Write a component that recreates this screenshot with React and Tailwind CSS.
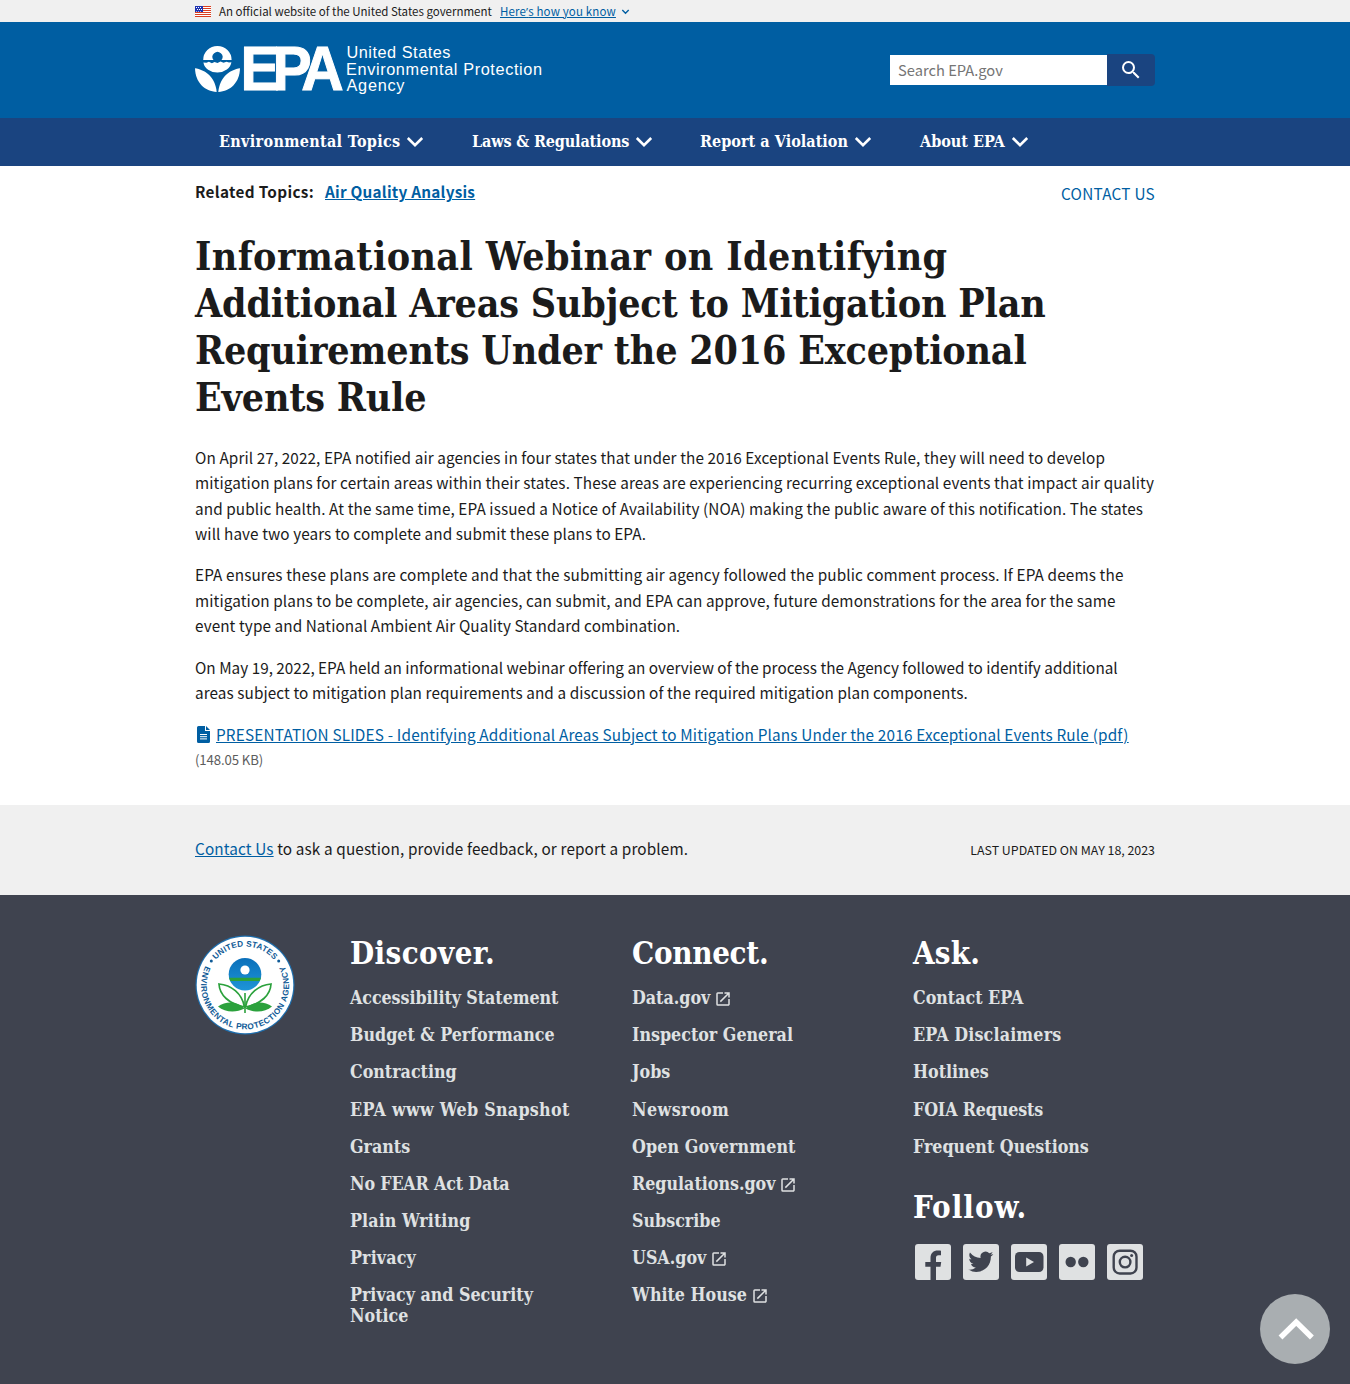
import React from 'react';

const SANS = 'font-["Noto_Sans_CJK_SC",sans-serif]';
const SERIF = 'font-["DejaVu_Serif_Condensed","DejaVu_Serif",serif] font-bold';

function Flag() {
  return (
    <svg width="16" height="11" viewBox="0 0 16 11" className="mr-2 shrink-0">
      <rect width="16" height="11" fill="#fff" />
      {[0, 2, 4, 6, 8, 10].map((y) => (
        <rect key={y} y={y} width="16" height="1" fill="#db3e1f" />
      ))}
      <rect width="8" height="6" fill="#1e33b1" />
      {[1, 3, 5].map((x) => (
        <g key={x} fill="#fff">
          <rect x={x} y="1" width="1" height="1" />
          <rect x={x + 1} y="3" width="1" height="1" />
          <rect x={x} y="5" width="1" height=".6" />
        </g>
      ))}
    </svg>
  );
}

function Logo() {
  return (
    <svg width="352" height="54" viewBox="195 43 352 54" className="block overflow-visible">
      <g fill="#fff">
        <path d="M203.200 60a14.200 14 0 0 1 28.400 0H221.500a5 5 0 1 0-8 0z" />
        <path d="M203.400 62.400l3 .4 2.500-1 3 1.400 2.600-1.200 3 1 3-1.400 3 1.200 3-1 2.500.8 2.400-.4a14.100 11.600 0 0 1-28 .2z" />
        <path d="M195 68.200c9.800 1.500 20 8 21.700 23.700-12-.6-21.400-9.500-21.700-23.700z" />
        <path d="M240 68.200c-9.800 1.500-20 8-21.700 23.700 12-.6 21.400-9.500 21.700-23.700z" />
      </g>
      <text
        transform="translate(240.500 0) scale(.94 1)"
        x="0 34 64.500"
        y="90.200"
        fill="#fff"
        stroke="#fff"
        strokeWidth="1"
        fontFamily="Liberation Sans, Arial, sans-serif"
        fontWeight="700"
        fontSize="62.500"
      >
        EPA
      </text>
      <g fill="#fff" fontFamily="Liberation Sans, Arial, sans-serif" fontSize="16.300">
        <text x="346.500" y="58.300" textLength="104">United States</text>
        <text x="346" y="74.600" textLength="196">Environmental Protection</text>
        <text x="346.500" y="91.200" textLength="58">Agency</text>
      </g>
    </svg>
  );
}

function Seal() {
  return (
    <svg width="100" height="100" viewBox="0 0 100 100" className="block">
      <circle cx="50" cy="50" r="49.500" fill="#1f6fae" />
      <circle cx="50" cy="50" r="48.300" fill="#fff" />
      <defs>
        <linearGradient id="sky" x1="0" y1="0" x2="0" y2="1">
          <stop offset="0" stopColor="#0a6fba" />
          <stop offset="1" stopColor="#1e95d6" />
        </linearGradient>
        <path id="ringTop" d="M11.500 50a38.500 38.500 0 0 1 77 0" />
        <path id="ringLow" d="M11 30a44 44 0 1 0 78 0" />
      </defs>
      <g fill="#0f5a96" fontFamily="Liberation Sans, Arial, sans-serif" fontWeight="700" fontSize="8.200">
        <text>
          <textPath href="#ringTop" startOffset="50%" textAnchor="middle" textLength="66">UNITED STATES</textPath>
        </text>
        <text>
          <textPath href="#ringLow" startOffset="50%" textAnchor="middle" textLength="178">ENVIRONMENTAL PROTECTION AGENCY</textPath>
        </text>
      </g>
      <circle cx="16.300" cy="26" r="1.500" fill="#0f5a96" />
      <circle cx="83.700" cy="26" r="1.500" fill="#0f5a96" />
      <circle cx="50" cy="39.300" r="16.300" fill="url(#sky)" />
      <path d="M34.100 42.700h31.800a16.300 16.300 0 0 1-1.300 3.300H35.400a16.300 16.300 0 0 1-1.300-3.300z" fill="#2ba13c" />
      <circle cx="50" cy="35" r="4.600" fill="#fff" />
      <g fill="#fff" stroke="#2ba13c" strokeWidth="1.700">
        <path d="M49.500 72C47 58 36 50 24 49c.5 11 10 20 25.500 23z" />
        <path d="M50.500 72C53 58 64 50 76 49c-.5 11-10 20-25.500 23z" />
      </g>
      <g fill="#2ba13c">
        <path d="M49.500 73.500C42 66 31 66 23 71.500c7 6 18 6.500 26.500 2z" />
        <path d="M50.500 73.500C58 66 69 66 77 71.500c-7 6-18 6.500-26.500 2z" />
        <path d="M49.200 58h1.600v20h-1.600z" />
      </g>
    </svg>
  );
}

function Chevron() {
  return (
    <svg width="18" height="12" viewBox="0 0 18 12" className="shrink-0">
      <path d="M1.800 2l7.200 7.200L16.200 2" fill="none" stroke="#fff" strokeWidth="2.600" />
    </svg>
  );
}

function External() {
  return (
    <svg width="18" height="18" viewBox="0 0 24 24" fill="#dfe1e2" className="ml-1 mt-[3px] shrink-0">
      <path d="M19 19H5V5h7V3H5a2 2 0 0 0-2 2v14a2 2 0 0 0 2 2h14c1.100 0 2-.9 2-2v-7h-2v7zM14 3v2h3.590l-9.830 9.830 1.410 1.410L19 6.410V10h2V3h-7z" />
    </svg>
  );
}

const NAV = [
  { label: 'Environmental Topics', size: 'w-[253px]', track: 'w-[181px] tracking-[0.32px]' },
  { label: 'Laws & Regulations', size: 'w-[228px]', track: 'w-[157px] tracking-[-0.14px]' },
  { label: 'Report a Violation', size: 'w-[220px]', track: 'w-[148px] tracking-[0.04px]' },
  { label: 'About EPA', size: 'w-[140px]', track: 'w-[85px]' },
];

const DISCOVER = ['Accessibility Statement', 'Budget & Performance', 'Contracting', 'EPA www Web Snapshot', 'Grants', 'No FEAR Act Data', 'Plain Writing', 'Privacy', 'Privacy and Security Notice'];
const CONNECT = ['Data.gov', 'Inspector General', 'Jobs', 'Newsroom', 'Open Government', 'Regulations.gov', 'Subscribe', 'USA.gov', 'White House'];
const EXTERNAL = ['Data.gov', 'Regulations.gov', 'USA.gov', 'White House'];
const ASK = ['Contact EPA', 'EPA Disclaimers', 'Hotlines', 'FOIA Requests', 'Frequent Questions'];

const TRACKING = {
  'Accessibility Statement': 'tracking-[-0.06px]',
  'EPA www Web Snapshot': 'tracking-[0.3px]',
  'No FEAR Act Data': 'tracking-[-0.15px]',
  Newsroom: 'tracking-[0.45px]',
  'Open Government': 'tracking-[0.13px]',
  'EPA Disclaimers': 'tracking-[0.16px]',
  'FOIA Requests': 'tracking-[-0.15px]',
  'Plain Writing': 'tracking-[0.1px]',
  Privacy: 'tracking-[0.15px]',
};

function Column({ title, items, className, titleClass }) {
  return (
    <div className={className}>
      <h2 className={`${titleClass} h-[37px] text-[31px] leading-[37px] text-white`}>{title}</h2>
      <ul className="mt-[15.2px] flex flex-col gap-[16.15px] text-[17.7px] leading-[21px] text-[#dfe1e2]">
        {items.map((t) => (
          <li key={t} className="flex items-center">
            <a href="#" className={TRACKING[t]}>{t}</a>
            {EXTERNAL.includes(t) && <External />}
          </li>
        ))}
      </ul>
    </div>
  );
}

function Social({ children }) {
  return (
    <svg width="36" height="36" viewBox="0 0 36 36" className="block">
      <rect width="36" height="36" rx="3" fill="#dfe1e2" />
      <g fill="#3f434f">{children}</g>
    </svg>
  );
}

function Line({ children, className = '' }) {
  return <span className={`${className} block whitespace-nowrap`}>{children}</span>;
}

export default function App() {
  return (
    <div className={`${SANS} relative h-[1384px] w-[1350px] overflow-hidden bg-white text-[15.3px] text-[#1b1b1b]`}>
      <div className="h-[22px] bg-[#f0f0f0]">
        <div className="mx-auto flex h-[22px] w-[960px] items-center text-[11.5px] leading-[22px]">
          <Flag />
          <span className="w-[281px] whitespace-nowrap">An official website of the United States government</span>
          <a href="#" className="whitespace-nowrap tracking-[0.15px] text-[#005ea2] underline underline-offset-1">
            Here<span className='font-["Open_Sans"]'>’</span>s how you know
          </a>
          <svg width="9" height="6" viewBox="0 0 8 6" className="ml-[5px] mt-0.5">
            <path d="M.8 1L4 4.200 7.200 1" fill="none" stroke="#005ea2" strokeWidth="1.400" />
          </svg>
        </div>
      </div>

      <header className="h-24 bg-[#005ea2]">
        <div className="mx-auto flex h-24 w-[960px] items-center justify-between">
          <Logo />
          <form className="flex items-center">
            <input
              placeholder="Search EPA.gov"
              className="h-[30px] w-[217px] bg-white px-2 pb-px text-[14.7px] outline-none placeholder:text-[#757575]"
            />
            <button type="button" className="flex h-8 w-12 items-center justify-center rounded-r bg-[#1a4480]">
              <svg width="24" height="24" viewBox="0 0 24 24" fill="#fff">
                <path d="M15.500 14h-.79l-.28-.27A6.470 6.470 0 0 0 16 9.500 6.500 6.500 0 1 0 9.500 16c1.610 0 3.090-.59 4.230-1.570l.27.28v.79l5 4.990L20.490 19l-4.990-5zm-6 0C7.010 14 5 11.990 5 9.500S7.010 5 9.500 5 14 7.010 14 9.500 11.990 14 9.500 14z" />
              </svg>
            </button>
          </form>
        </div>
      </header>

      <nav className="h-12 bg-[#1a4480]">
        <div className={`${SERIF} mx-auto flex h-12 w-[960px] items-center pl-6 text-[16px] text-white`}>
          {NAV.map((n) => (
            <a key={n.label} href="#" className={`${n.size} flex items-center gap-1.5`}>
              <span className={`${n.track} whitespace-nowrap`}>{n.label}</span>
              <Chevron />
            </a>
          ))}
        </div>
      </nav>

      <main className="mx-auto h-[639px] w-[960px]">
        <div className="flex h-[67px] justify-between">
          <div className="flex pt-3 font-bold leading-[26px]">
            <span className="w-[130px] tracking-[0.33px]">Related Topics:</span>
            <a href="#" className="tracking-[0.24px] text-[#005ea2] underline underline-offset-1">Air Quality Analysis</a>
          </div>
          <a href="#" className="pt-[14px] leading-[26px] tracking-[0.27px] text-[#005ea2]">CONTACT US</a>
        </div>
        <h1 className={`${SERIF} text-[39px] leading-[47px] tracking-[-0.19px]`}>
          <Line className="tracking-[0.37px]">Informational Webinar on Identifying</Line>
          <Line>Additional Areas Subject to Mitigation Plan</Line>
          <Line>Requirements Under the 2016 Exceptional</Line>
          <Line>Events Rule</Line>
        </h1>
        <div className="mt-[23.7px] flex flex-col gap-4 leading-[25.44px] tracking-[0.107px]">
          <p>
            <Line className="tracking-[0.1px]">On April 27, 2022, EPA notified air agencies in four states that under the 2016 Exceptional Events Rule, they will need to develop</Line>
            <Line>mitigation plans for certain areas within their states. These areas are experiencing recurring exceptional events that impact air quality</Line>
            <Line>and public health. At the same time, EPA issued a Notice of Availability (NOA) making the public aware of this notification. The states</Line>
            <Line className="tracking-[0.085px]">will have two years to complete and submit these plans to EPA.</Line>
          </p>
          <p>
            <Line className="tracking-[0.13px]">EPA ensures these plans are complete and that the submitting air agency followed the public comment process. If EPA deems the</Line>
            <Line>mitigation plans to be complete, air agencies, can submit, and EPA can approve, future demonstrations for the area for the same</Line>
            <Line className="tracking-[0.085px]">event type and National Ambient Air Quality Standard combination.</Line>
          </p>
          <p>
            <Line className="tracking-[0.015px]">On May 19, 2022, EPA held an informational webinar offering an overview of the process the Agency followed to identify additional</Line>
            <Line className="tracking-[0.085px]">areas subject to mitigation plan requirements and a discussion of the required mitigation plan components.</Line>
          </p>
          <div>
            <div className="flex items-center whitespace-nowrap">
              <svg width="13" height="17" viewBox="0 0 13 17" className="ml-0.5 mr-1.5">
                <path d="M1.500 0H8v5h5v10.500a1.500 1.500 0 0 1-1.500 1.500h-10A1.500 1.500 0 0 1 0 15.500v-14A1.500 1.500 0 0 1 1.500 0zM9 0l4 4H9z" fill="#005ea2" />
                <path d="M3 8.500h7M3 10.700h7M3 12.900h7" stroke="#fff" strokeWidth="1" />
              </svg>
              <a href="#" className="tracking-[0.19px] text-[#005ea2] underline underline-offset-1">
                PRESENTATION SLIDES - Identifying Additional Areas Subject to Mitigation Plans Under the 2016 Exceptional Events Rule (pdf)
              </a>
            </div>
            <span className="block text-[13.2px] tracking-[-0.1px] text-[#5c5c5c]">(148.05 KB)</span>
          </div>
        </div>
      </main>

      <section className="h-[90px] bg-[#f0f0f0]">
        <div className="mx-auto flex h-[90px] w-[960px] items-center justify-between">
          <p className="pb-[3px] tracking-[0.13px]">
            <a href="#" className="text-[#005ea2] underline underline-offset-1">Contact Us</a> to ask a question, provide feedback, or report a problem.
          </p>
          <p className="text-[12.4px]">LAST UPDATED ON MAY 18, 2023</p>
        </div>
      </section>

      <footer className="h-[489px] bg-[#3f434f]">
        <div className={`${SERIF} mx-auto flex w-[960px] pt-10`}>
          <div className="w-[155px]">
            <Seal />
          </div>
          <Column title="Discover." items={DISCOVER} className="w-[282px] pr-[60px]" titleClass="tracking-[0.4px]" />
          <Column title="Connect." items={CONNECT} className="w-[281px]" titleClass="tracking-[-0.3px]" />
          <div className="w-[242px]">
            <Column title="Ask." items={ASK} titleClass="tracking-[0.2px]" />
            <h2 className="mt-[31.8px] text-[31px] leading-[37px] tracking-[1px] text-white">Follow.</h2>
            <div className="ml-0.5 mt-[18.4px] flex gap-3">
              <Social>
                <path d="M15.500 36V22.800H10.300V18h5.200v-4C15.500 9 18.500 6.500 22.800 6.500c1.400 0 2.500.1 3.200.2V11.300h-2.300c-2.200 0-2.700 1.100-2.700 2.800V18h5.200l-.7 4.800H21V36z" />
              </Social>
              <Social>
                <path transform="translate(5.500 4.800) scale(1.050)" d="M23.600 4.900c-.9.400-1.800.6-2.800.8 1-.6 1.800-1.600 2.100-2.700-.9.600-2 1-3.100 1.200a4.900 4.900 0 0 0-8.300 4.500A13.900 13.900 0 0 1 1.400 3.500a4.900 4.900 0 0 0 1.500 6.500c-.8 0-1.500-.2-2.200-.6v.1c0 2.400 1.700 4.300 3.900 4.800-.7.200-1.500.2-2.200.1.600 2 2.400 3.400 4.600 3.400A9.800 9.800 0 0 1-.2 19.800 13.900 13.900 0 0 0 7.300 22c9.100 0 14-7.500 14-14v-.6c.9-.7 1.700-1.500 2.300-2.500z" />
              </Social>
              <Social>
                <rect x="4" y="8" width="28.500" height="20" rx="4.500" />
                <path d="M15.200 13.500l7.800 4.500-7.800 4.500z" fill="#dfe1e2" />
              </Social>
              <Social>
                <circle cx="11.700" cy="18" r="5.200" />
                <circle cx="24.300" cy="18" r="5.200" />
              </Social>
              <Social>
                <rect x="6.700" y="6.700" width="22.800" height="22.800" rx="6" fill="none" stroke="#3f434f" strokeWidth="2.400" />
                <circle cx="18.100" cy="18.100" r="5.300" fill="none" stroke="#3f434f" strokeWidth="2.400" />
                <circle cx="24.600" cy="11.600" r="1.500" />
              </Social>
            </div>
          </div>
        </div>
      </footer>

      <button className="absolute bottom-5 right-5 flex h-[70px] w-[70px] items-center justify-center rounded-full bg-[#a9aeb1]">
        <svg width="36" height="24" viewBox="0 0 36 24" className="ml-0.5">
          <path d="M2.500 20.500L18.200 5l15.700 15.500" fill="none" stroke="#fff" strokeWidth="5.500" />
        </svg>
      </button>
    </div>
  );
}
